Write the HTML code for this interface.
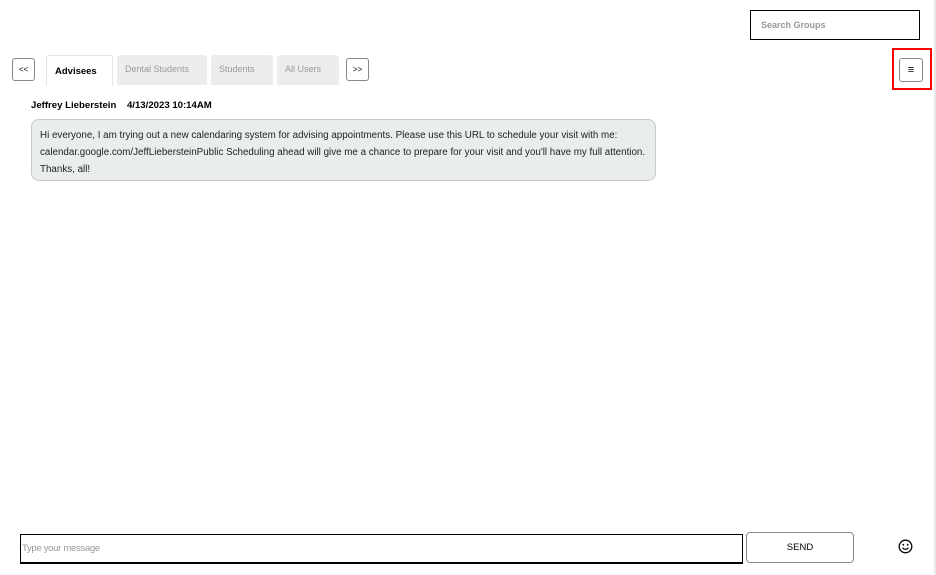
<!DOCTYPE html>
<html><head><style>
body{margin:0;width:936px;height:575px;background:#fff;font-family:"Liberation Sans",Arial,sans-serif;position:relative;overflow:hidden}
.a{position:absolute;box-sizing:border-box}
.btn{border:1px solid #888;border-radius:3px;font-size:8px;display:flex;align-items:center;justify-content:center;color:#000}
.tab{background:#eceeee;border-radius:3px 3px 0 0;font-size:9px;color:#999;padding:9px 0 0 8px;height:30px;top:55px}
</style></head><body>
<div class="a" style="left:934px;top:0;width:2px;height:575px;background:#e8e8e8"></div>
<div class="a" style="left:750px;top:10px;width:170px;height:30px;border:1px solid #000;font-size:9px;color:#999;font-weight:bold;padding:9px 0 0 10px">Search Groups</div>
<div class="a" style="left:892px;top:48px;width:40px;height:42px;border:2px solid #f00"></div>
<div class="a btn" style="left:899px;top:58px;width:24px;height:24px;border-radius:3px;font-size:11px">&#8801;</div>
<div class="a btn" style="left:12px;top:58px;width:23px;height:23px">&lt;&lt;</div>
<div class="a" style="left:46px;top:55px;width:67px;height:31px;border:1px solid #e4e4e4;border-bottom:none;border-radius:3px 3px 0 0;font-size:9.5px;font-weight:bold;padding:10px 0 0 8px">Advisees</div>
<div class="a tab" style="left:117px;width:90px">Dental Students</div>
<div class="a tab" style="left:211px;width:62px">Students</div>
<div class="a tab" style="left:277px;width:62px">All Users</div>
<div class="a btn" style="left:346px;top:58px;width:23px;height:23px">&gt;&gt;</div>
<div class="a" style="left:31px;top:100px;font-size:9.6px;font-weight:bold;white-space:nowrap">Jeffrey Lieberstein&nbsp;&nbsp;&nbsp; 4/13/2023 10:14AM</div>
<div class="a" style="left:31px;top:119px;width:625px;height:62px;background:#eaeded;border:1px solid #c8c8c8;border-radius:8px;font-size:9.8px;line-height:17px;padding:7px 0 0 8px;color:#222;white-space:nowrap">Hi everyone, I am trying out a new calendaring system for advising appointments. Please use this URL to schedule your visit with me:<br>calendar.google.com/JeffLiebersteinPublic Scheduling ahead will give me a chance to prepare for your visit and you'll have my full attention.<br>Thanks, all!</div>
<div class="a" style="left:20px;top:534px;width:723px;height:30px;border:1px solid #000;border-width:1px 1px 2px 1px;font-size:9.5px;color:#999;padding:8px 0 0 1px;letter-spacing:-0.3px">Type your message</div>
<div class="a btn" style="left:746px;top:532px;width:108px;height:31px;border-radius:4px;font-size:9.5px">SEND</div>
<svg class="a" style="left:898px;top:539px" width="15" height="15" viewBox="0 0 15 15"><circle cx="7.5" cy="7.5" r="6.3" fill="none" stroke="#000" stroke-width="1.3"/><circle cx="5.3" cy="5.8" r="0.9"/><circle cx="9.7" cy="5.8" r="0.9"/><path d="M4.5 8.8 Q7.5 12 10.5 8.8" fill="none" stroke="#000" stroke-width="1.2"/></svg>
</body></html>
